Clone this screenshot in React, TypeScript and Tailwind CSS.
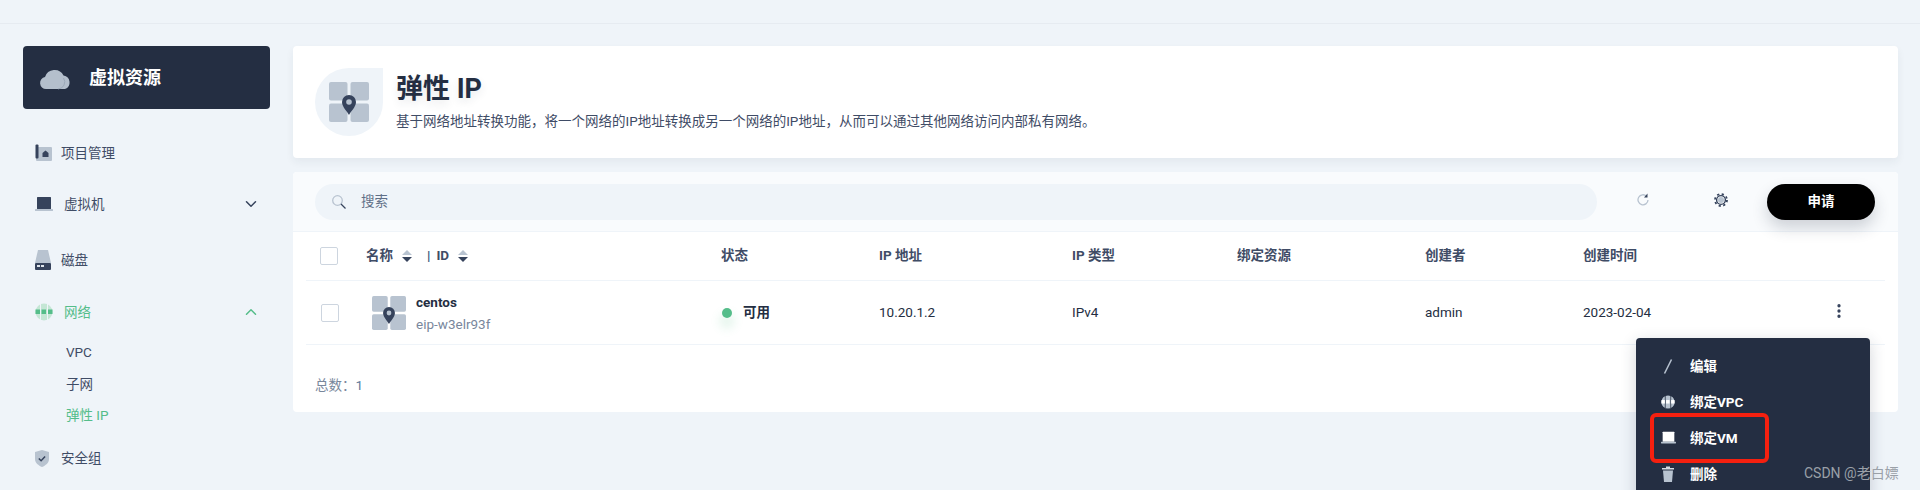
import React from 'react';
import { ChevronDown, ChevronUp, MoreVertical } from 'lucide-react';

const FONT = '[font-family:Roboto,"Noto_Sans_CJK_SC",sans-serif]';

// two-tone icons, same grey/navy pairing everywhere
const CloudIcon = () => (
  <svg width="32" height="24" viewBox="0 0 32 24">
    <path d="M7 23a6 6 0 0 1-1-11.900 A10 10 0 0 1 24.500 9.500 A7 7 0 0 1 26 23z" fill="#b4bfcc" />
    <path d="M19 23a7 7 0 0 0 5.500-11" fill="none" stroke="#96a3b2" strokeWidth="0.8" />
  </svg>
);

const ProjectIcon = () => (
  <svg width="18" height="18" viewBox="0 0 18 18">
    <rect x="1" y="3" width="16" height="14" rx="1" fill="#b8c3d0" />
    <rect x="0.500" y="0.500" width="3" height="14" rx="1" fill="#36435c" />
    <path d="M7.500 13v-4l3-2.500 3 2.500v4z" fill="#36435c" />
  </svg>
);

const LaptopIcon = ({ screen = '#36435c', base = '#b8c3d0', width = 18 }: { screen?: string; base?: string; width?: number }) => (
  <svg width={width} height={(width * 16) / 18} viewBox="0 0 18 16">
    <rect x="2" y="1" width="14" height="12" rx="0.500" fill={screen} />
    <rect x="0" y="13" width="18" height="2" rx="0.500" fill={base} />
  </svg>
);

const DiskIcon = () => (
  <svg width="16" height="20" viewBox="0 0 16 20">
    <path d="M3 0h10l3 13H0z" fill="#b8c3d0" />
    <rect x="0" y="13" width="16" height="7" rx="1" fill="#36435c" />
    <rect x="2" y="15" width="3" height="2" fill="#dfe5ec" />
    <rect x="6" y="15" width="3" height="2" fill="#dfe5ec" />
  </svg>
);

const GlobeIcon = () => (
  <svg width="18" height="18" viewBox="0 0 18 18">
    <circle cx="9" cy="9" r="8.500" fill="#c4e6d5" />
    <path d="M5.500 1v16M12.500 1v16" stroke="#eff4f9" strokeWidth="1" />
    <rect x="0.500" y="6.500" width="4.500" height="4.500" fill="#55bd8a" />
    <rect x="6.500" y="6.500" width="4.500" height="4.500" fill="#55bd8a" />
    <rect x="13" y="6.500" width="4.500" height="4.500" fill="#55bd8a" />
  </svg>
);

const ShieldIcon = () => (
  <svg width="14" height="17" viewBox="0 0 14 17">
    <path d="M7 0l7 2v7c0 4-3.500 6.500-7 8-3.500-1.500-7-4-7-8V2z" fill="#b8c3d0" />
    <path d="M3.800 8.500l2.300 2.200 4-4.200" fill="none" stroke="#36435c" strokeWidth="1.500" />
  </svg>
);

const EipIcon = ({ size }: { size: number }) => (
  <svg width={size} height={size} viewBox="0 0 40 40">
    <rect x="0" y="0" width="18.500" height="18.500" rx="2" fill="#b8c3d0" />
    <rect x="21.500" y="0" width="18.500" height="18.500" rx="2" fill="#b8c3d0" />
    <rect x="0" y="21.500" width="18.500" height="18.500" rx="2" fill="#b8c3d0" />
    <rect x="21.500" y="21.500" width="18.500" height="18.500" rx="2" fill="#b8c3d0" />
    <rect x="14" y="14" width="12" height="12" fill="#b8c3d0" />
    <path d="M20 33c-1-2.500-7-8-7-13a7 7 0 0 1 14 0c0 5-6 10.500-7 13z" fill="#36435c" />
    <circle cx="20" cy="20" r="2.800" fill="#b8c3d0" />
  </svg>
);

const SortIcon = () => (
  <svg width="10" height="12" viewBox="0 0 10 12">
    <path d="M5 0l5 5H0z" fill="#b8c3d0" />
    <path d="M5 12l5-5H0z" fill="#36435c" />
  </svg>
);

const Checkbox = () => (
  <span className="block w-[18px] h-[18px] rounded-[2px] border border-[#cdd5df] bg-white" />
);

const NavItem = ({ icon, label, active, caret, labelClass }: {
  icon: React.ReactNode;
  label: string;
  active?: boolean;
  caret?: 'up' | 'down';
  labelClass: string;
}) => (
  <div className={`flex items-center h-[20px] pl-[12px] pr-[10px] text-[13.500px] ${active ? 'text-[#55bd8a]' : 'text-[#3f4c66]'}`}>
    <span className="w-[26px] flex justify-start">{icon}</span>
    <span className={`flex-1 ${labelClass}`}>{label}</span>
    {caret === 'down' && <ChevronDown size={18} className="text-[#36435c]" />}
    {caret === 'up' && <ChevronUp size={18} className="text-[#55bd8a]" />}
  </div>
);

const Sidebar = () => (
  <aside className="w-[247px] shrink-0">
    <div className="h-[63px] rounded-[4px] bg-[#242e42] flex items-center pl-[16px] text-white">
      <CloudIcon />
      <span className="ml-[18px] text-[18px] font-bold">虚拟资源</span>
    </div>
    <div className="mt-[34px]">
      <NavItem icon={<ProjectIcon />} label="项目管理" labelClass="" />
    </div>
    <div className="mt-[31px]">
      <NavItem icon={<LaptopIcon />} label="虚拟机" caret="down" labelClass="ml-[3px]" />
    </div>
    <div className="mt-[36px]">
      <NavItem icon={<DiskIcon />} label="磁盘" labelClass="" />
    </div>
    <div className="mt-[32px]">
      <NavItem icon={<GlobeIcon />} label="网络" active caret="up" labelClass="ml-[3px]" />
    </div>
    <div className="mt-[20px] pl-[43px] text-[13.500px] leading-[20px] text-[#3f4c66] flex flex-col gap-[11.500px]">
      <span>VPC</span>
      <span>子网</span>
      <span className="text-[#55bd8a]">弹性 IP</span>
    </div>
    <div className="mt-[23px]">
      <NavItem icon={<ShieldIcon />} label="安全组" labelClass="" />
    </div>
  </aside>
);

const columns = 'grid grid-cols-[60px_355px_158px_193px_165px_188px_158px_1fr] items-center';

const Table = () => (
  <div className="px-[13px]">
    <div className={`${columns} h-[49px] pb-[1px] border-b border-[#eff4f9] text-[13.500px] font-bold text-[#3f4c66]`}>
      <span className="pl-[14px]"><Checkbox /></span>
      <span className="flex items-center">
        <span>名称</span>
        <span className="ml-[9px]"><SortIcon /></span>
        <span className="ml-[15px] text-[#36557a]">|</span>
        <span className="ml-[6px]">ID</span>
        <span className="ml-[9px]"><SortIcon /></span>
      </span>
      <span>状态</span>
      <span>IP 地址</span>
      <span>IP 类型</span>
      <span>绑定资源</span>
      <span>创建者</span>
      <span>创建时间</span>
    </div>
    <div className={`${columns} h-[64px] border-b border-[#eff4f9] text-[13.500px] text-[#242e42]`}>
      <span className="pl-[15px]"><Checkbox /></span>
      <span className="flex items-center pl-[6px]">
        <EipIcon size={34} />
        <span className="ml-[10px] flex flex-col">
          <span className="leading-[20px] font-bold text-[#242e42]">centos</span>
          <span className="leading-[20px] mt-[2px] text-[#79879c]">eip-w3elr93f</span>
        </span>
      </span>
      <span className="flex items-center">
        <span className="block w-[10px] h-[10px] ml-[1px] rounded-full bg-[#55bd8a] shadow-[0_8px_10px_3px_rgba(85,189,138,0.14)]" />
        <span className="ml-[11px] font-bold">可用</span>
      </span>
      <span>10.20.1.2</span>
      <span>IPv4</span>
      <span />
      <span>admin</span>
      <span className="flex items-center justify-between pr-[37px]">
        <span>2023-02-04</span>
        <MoreVertical size={18} strokeWidth={2.400} className="text-[#36435c] -mt-[4px]" />
      </span>
    </div>
    <div className="h-[66px] pt-[30px] pl-[9px] text-[13.500px] leading-[20px] text-[#79879c]">
      总数：<span className="text-[#5d7a9c]">1</span>
    </div>
  </div>
);

const Toolbar = () => (
  <div className="h-[60px] bg-[#f9fbfd] border-b border-[#eff4f9] flex items-center pl-[22px] pr-[23px]">
    <div className="flex-1 h-[36px] rounded-[18px] bg-[#eff4f9] flex items-center pl-[17px] text-[13.500px] text-[#5f6f87]">
      <svg width="14" height="14" viewBox="0 0 14 14">
        <circle cx="5.500" cy="5.500" r="4.800" fill="none" stroke="#b8c3d0" strokeWidth="1.300" />
        <path d="M9 9l4.500 4.500" stroke="#36435c" strokeWidth="1.300" />
      </svg>
      <span className="ml-[15px]">搜索</span>
    </div>
    <svg width="12" height="13" viewBox="0 0 12 13" className="ml-[40px] -mt-[4px]">
      <path d="M9.500 3.200A5 5 0 1 0 11 7" fill="none" stroke="#b8c3d0" strokeWidth="1.300" />
      <path d="M10.500 0.500v4h-3.500z" fill="#36435c" />
    </svg>
    <svg width="14" height="14" viewBox="0 0 14 14" className="ml-[65px] -mt-[4px]">
      <circle cx="7" cy="7" r="3" fill="#b8c3d0" />
      <circle cx="7" cy="7" r="4.400" fill="none" stroke="#36435c" strokeWidth="1.400" />
      <circle cx="7" cy="7" r="6" fill="none" stroke="#36435c" strokeWidth="1.800" strokeDasharray="2.200 2.512" />
    </svg>
    <button className="ml-[39px] w-[108px] h-[36px] rounded-[18px] bg-black text-white text-[13.500px] font-bold shadow-[0_8px_16px_rgba(36,46,66,0.2)]">
      申请
    </button>
  </div>
);

const MenuRow = ({ icon, label }: { icon: React.ReactNode; label: string }) => (
  <div className="h-[36px] flex items-center pl-[22px] text-[13.500px] font-bold text-white">
    <span className="w-[20px] flex justify-center">{icon}</span>
    <span className="ml-[12px]">{label}</span>
  </div>
);

const ActionMenu = () => (
  <div className="absolute left-[1636px] top-[338px] w-[234px] h-[170px] rounded-[4px] bg-[#242e42] pt-[10px] shadow-[0_4px_16px_rgba(36,46,66,0.2)]">
    <MenuRow
      label="编辑"
      icon={<svg width="10" height="15" viewBox="0 0 10 15"><path d="M8.500 0.500L1.500 14.500" stroke="#b8c3d0" strokeWidth="1.600" /></svg>}
    />
    <MenuRow
      label="绑定VPC"
      icon={
        <svg width="14" height="14" viewBox="0 0 18 18">
          <circle cx="9" cy="9" r="8.500" fill="#b8c3d0" />
          <path d="M5.500 1v16M12.500 1v16" stroke="#242e42" strokeWidth="1" />
          <rect x="0.500" y="6.500" width="4.500" height="4.500" fill="#fff" />
          <rect x="6.500" y="6.500" width="4.500" height="4.500" fill="#fff" />
          <rect x="13" y="6.500" width="4.500" height="4.500" fill="#fff" />
        </svg>
      }
    />
    <MenuRow label="绑定VM" icon={<LaptopIcon screen="#ffffff" width={15} />} />
    <MenuRow
      label="删除"
      icon={
        <svg width="12" height="16" viewBox="0 0 12 16">
          <path d="M0 2h4V0.500h4V2h4v1.500H0z" fill="#d5dbe3" />
          <path d="M1 4.500h10l-1 11.500H2z" fill="#b8c3d0" />
        </svg>
      }
    />
  </div>
);

export default function App() {
  return (
    <div className={`relative h-[490px] overflow-hidden bg-[#eff4f9] ${FONT}`}>
      <div className="h-[24px] border-b border-[#e6ebf1]" />
      <div className="flex pt-[22px] pl-[23px]">
        <Sidebar />
        <main className="ml-[23px] w-[1605px]">
          <div className="h-[112px] rounded-[4px] bg-white flex items-center pl-[22px] shadow-[0_4px_8px_rgba(36,46,66,0.06)]">
            <div className="w-[68px] h-[68px] rounded-l-full rounded-br-full bg-[#eff4f9] flex items-center justify-center">
              <EipIcon size={40} />
            </div>
            <div className="ml-[13px] pb-[2px]">
              <h1 className="text-[27px] leading-[32px] font-bold text-[#242e42] [text-shadow:0_4px_8px_rgba(36,46,66,0.1)]">弹性 IP</h1>
              <p className="mt-[7px] text-[13.500px] leading-[18px] text-[#3f4c66]">
                基于网络地址转换功能，将一个网络的IP地址转换成另一个网络的IP地址，从而可以通过其他网络访问内部私有网络。
              </p>
            </div>
          </div>
          <div className="mt-[14px] h-[240px] rounded-[4px] bg-white overflow-hidden">
            <Toolbar />
            <Table />
          </div>
        </main>
      </div>
      <ActionMenu />
      <div className="absolute left-[1650px] top-[413px] w-[119px] h-[50px] rounded-[6px] border-[4px] border-[#f5200f]" />
      <div className="absolute left-[1804px] top-[463px] text-[14px] leading-[20px] text-[#9aa0a8]">CSDN @老白嫖</div>
    </div>
  );
}
